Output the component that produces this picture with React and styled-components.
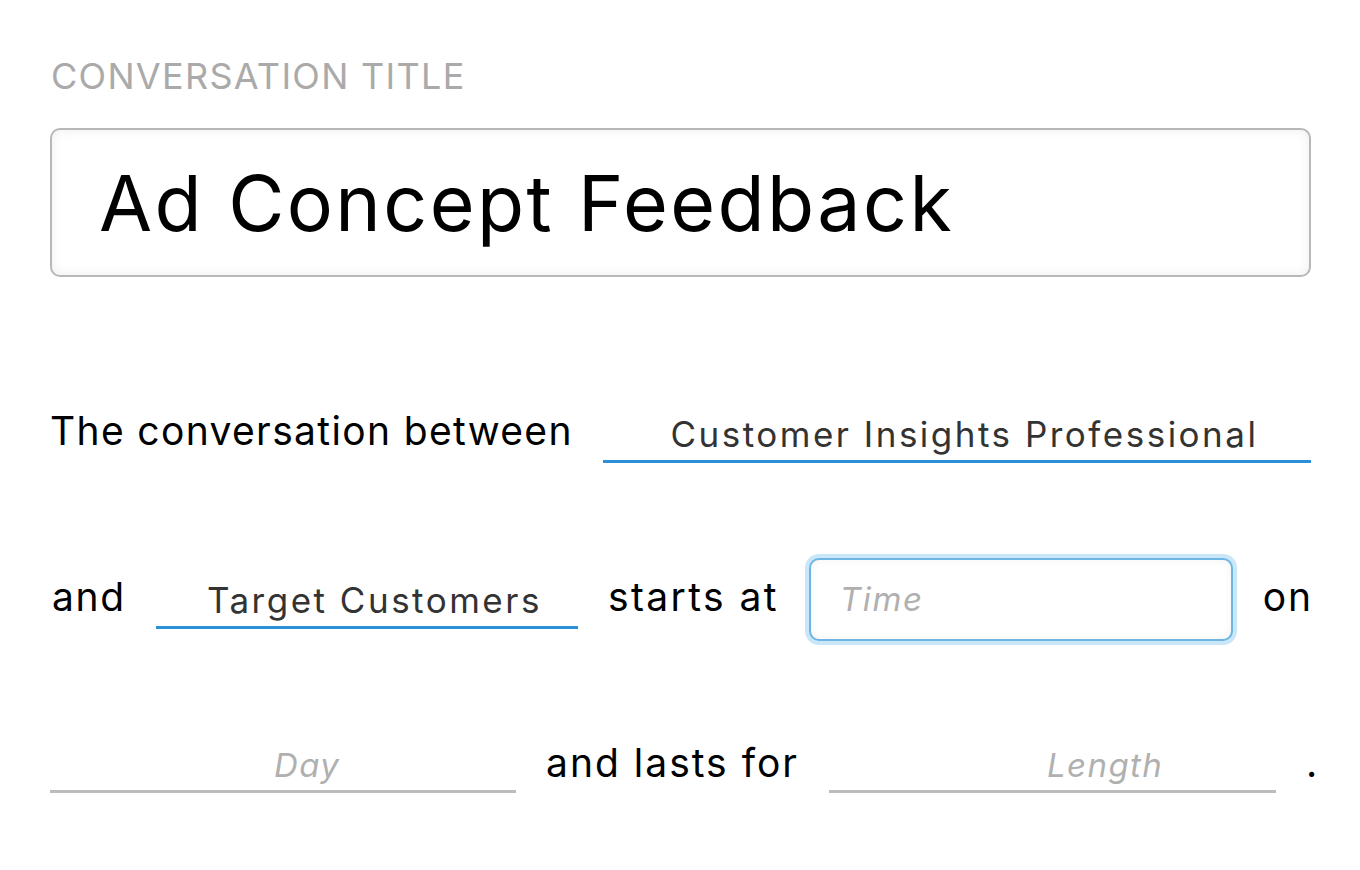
import React from "react";
import styled, { createGlobalStyle } from "styled-components";

const Global = createGlobalStyle`
  html, body { margin: 0; padding: 0; background: #fff; }
  body { font-family: Inter, "Open Sans", sans-serif; color: #000; }
  * { box-sizing: border-box; }
`;

const Page = styled.div`
  width: 1360px;
  height: 870px;
  padding: 52px 49px 0 50px;
  display: flex;
  flex-direction: column;
`;

const Label = styled.label`
  display: block;
  margin-left: 1px;
  font-size: 36px;
  line-height: 48px;
  letter-spacing: 1.3px;
  color: #aaa;
  text-transform: uppercase;
`;

const TitleInput = styled.input`
  display: block;
  margin-top: 28px;
  width: 100%;
  height: 149px;
  padding: 0 0 0 47px;
  border: 2px solid #b8b8b8;
  border-radius: 10px;
  background: #fff;
  box-shadow: inset 0 0 12px rgba(0, 0, 0, 0.07);
  font-family: inherit;
  font-size: 77px;
  letter-spacing: 2.4px;
  color: #000;
  outline: none;
`;

const Sentence = styled.div`
  display: flex;
  flex-direction: column;
  gap: 106px;
  margin-top: 124px;
`;

const Row = styled.div`
  display: flex;
  align-items: center;
  height: 60px;
  gap: 30px;
`;

const Word = styled.span`
  font-size: 39px;
  line-height: 60px;
  letter-spacing: ${(p) => p.$ls ?? 1.7}px;
  white-space: nowrap;
  margin-left: ${(p) => p.$ml || 0}px;
`;

const LineInput = styled.input`
  flex: ${(p) => (p.$width ? "none" : "1")};
  width: ${(p) => (p.$width ? `${p.$width}px` : "auto")};
  min-width: 0;
  height: 56px;
  margin-top: ${(p) => (p.$active ? 8 : 4)}px;
  padding: 0 0 0 ${(p) => p.$indent || 15}px;
  border: none;
  border-bottom: 3px solid ${(p) => (p.$active ? "#2b90d6" : "#bcbcbc")};
  background: transparent;
  font-family: inherit;
  font-size: 35px;
  letter-spacing: 2.5px;
  text-align: ${(p) => (p.$indent ? "left" : "center")};
  color: #333;
  outline: none;
  &::placeholder {
    color: #b0b0b0;
    font-style: italic;
    font-size: 33px;
    letter-spacing: 1.4px;
  }
`;

const BoxInput = styled.input`
  flex: none;
  width: ${(p) => p.$width}px;
  height: 83px;
  margin-top: 4px;
  padding: 0 0 0 29px;
  border: 2px solid #6db5e2;
  border-radius: 10px;
  background: #fff;
  box-shadow: 0 0 0 4px #c9e7f9, inset 0 0 10px rgba(0, 0, 0, 0.05);
  font-family: inherit;
  font-size: 33px;
  letter-spacing: 1.6px;
  color: #333;
  outline: none;
  &::placeholder {
    color: #b0b0b0;
    font-style: italic;
  }
`;

export default function App() {
  return (
    <>
      <Global />
      <Page>
        <Label htmlFor="title">Conversation Title</Label>
        <TitleInput id="title" defaultValue="Ad Concept Feedback" />
        <Sentence>
          <Row>
            <Word $ls={1.35}>The conversation between</Word>
            <LineInput $active defaultValue="Customer Insights Professional" />
          </Row>
          <Row>
            <Word $ml={2}>and</Word>
            <LineInput $active $width={422} defaultValue="Target Customers" />
            <Word $ls={2.4}>starts at</Word>
            <BoxInput $width={424} placeholder="Time" />
            <Word>on</Word>
          </Row>
          <Row>
            <LineInput $width={466} $indent={224} placeholder="Day" />
            <Word $ls={2}>and lasts for</Word>
            <LineInput $width={447} $indent={218} placeholder="Length" />
            <Word>.</Word>
          </Row>
        </Sentence>
      </Page>
    </>
  );
}
